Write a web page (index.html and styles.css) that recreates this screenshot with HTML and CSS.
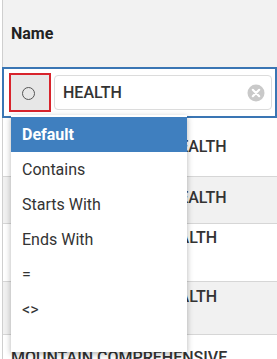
FILE: index.html
```html
<!DOCTYPE html>
<html lang="en">
<head>
    <meta charset="UTF-8">
    <meta name="viewport" content="width=device-width, initial-scale=1.0">
    <title>Name filter</title>
    <link rel="stylesheet" href="styles.css">
</head>
<body>
    <div class="grid">
        <div class="head">Name</div>
        <div class="filter">
            <div class="op"><span class="ring"></span></div>
            <div class="search">
                <span>HEALTH</span>
                <svg class="clear" width="18" height="18" viewBox="0 0 18 18">
                    <circle cx="9" cy="9" r="8.5" fill="#c9c9c9"/>
                    <path d="M5.8 5.8 L12.2 12.2 M12.2 5.8 L5.8 12.2" stroke="#fff" stroke-width="2.2" stroke-linecap="round"/>
                </svg>
            </div>
        </div>
        <div class="row r1">COUNTRY BEHAVIOR HEALTH</div>
        <div class="row alt r2">COUNTRY BEHAVIOR HEALTH</div>
        <div class="row r3">COUNTY BEHAVIOR HEALTH</div>
        <div class="row alt r4">COUNTY BEHAVIOR HEALTH</div>
        <div class="row r5">MOUNTAIN COMPREHENSIVE</div>

        <ul class="menu">
            <li class="on">Default</li>
            <li>Contains</li>
            <li>Starts With</li>
            <li>Ends With</li>
            <li>=</li>
            <li>&lt;&gt;</li>
        </ul>
    </div>
</body>
</html>
```

FILE: styles.css
```css
*{
    margin: 0px;
    padding: 0px;
    box-sizing: border-box;
}
body{
    font-family: Roboto, "Liberation Sans", sans-serif;
    font-size: 16px;
    color: #333;
    background: #fff;
    overflow: hidden;
}
.grid{
    position: relative;
    margin-left: 2px;
    border-left: 1px solid #cfcfcf;
    height: 359px;
}
.head{
    height: 67px;
    background: #f2f2f2;
    display: flex;
    align-items: center;
    padding-left: 8px;
    font-weight: 700;
    color: #222;
}
.filter{
    height: 51px;
    margin-left: -1px;
    border: 2px solid #3a76b4;
    display: flex;
    align-items: center;
    gap: 3px;
    padding: 0px 3px 0px 5px;
}
.op{
    width: 42px;
    height: 39px;
    border: 2px solid #d8242c;
    background: #e7e7e7;
    display: flex;
    align-items: center;
    justify-content: center;
    padding: 1px 3px 0px 0px;
}
.ring{
    width: 13px;
    height: 13px;
    border: 1.5px solid #555;
    border-radius: 50%;
}
.search{
    flex: 1;
    height: 35px;
    background: #fff;
    border: 1px solid #dcdcdc;
    border-radius: 4px;
    display: flex;
    align-items: center;
    justify-content: space-between;
    padding: 0px 6px 0px 8px;
    font-weight: 500;
    color: #333;
}
.row{
    border-bottom: 1px solid #d6d6d6;
    line-height: 18px;
    padding-left: 8px;
    font-weight: 500;
    white-space: nowrap;
    overflow: hidden;
}
.alt{
    background: #f1f1f1;
}
.r1{ height: 59px; padding-top: 20px; }
.r2{ height: 47px; padding-top: 12px; }
.r3{ height: 58px; padding-top: 5px; }
.r4{ height: 53px; padding-top: 6px; }
.r5{ height: 40px; padding-top: 14px; }
.menu{
    position: absolute;
    left: 8px;
    top: 115px;
    width: 176px;
    height: 237px;
    list-style: none;
    background: #fff;
    padding-top: 2px;
    box-shadow: 0px 2px 6px rgba(0,0,0,0.3);
}
.menu li{
    height: 35px;
    line-height: 35px;
    padding-left: 11px;
    color: #333;
}
.menu li.on{
    background: #3f7fbf;
    color: #fff;
    font-weight: 700;
}
```
